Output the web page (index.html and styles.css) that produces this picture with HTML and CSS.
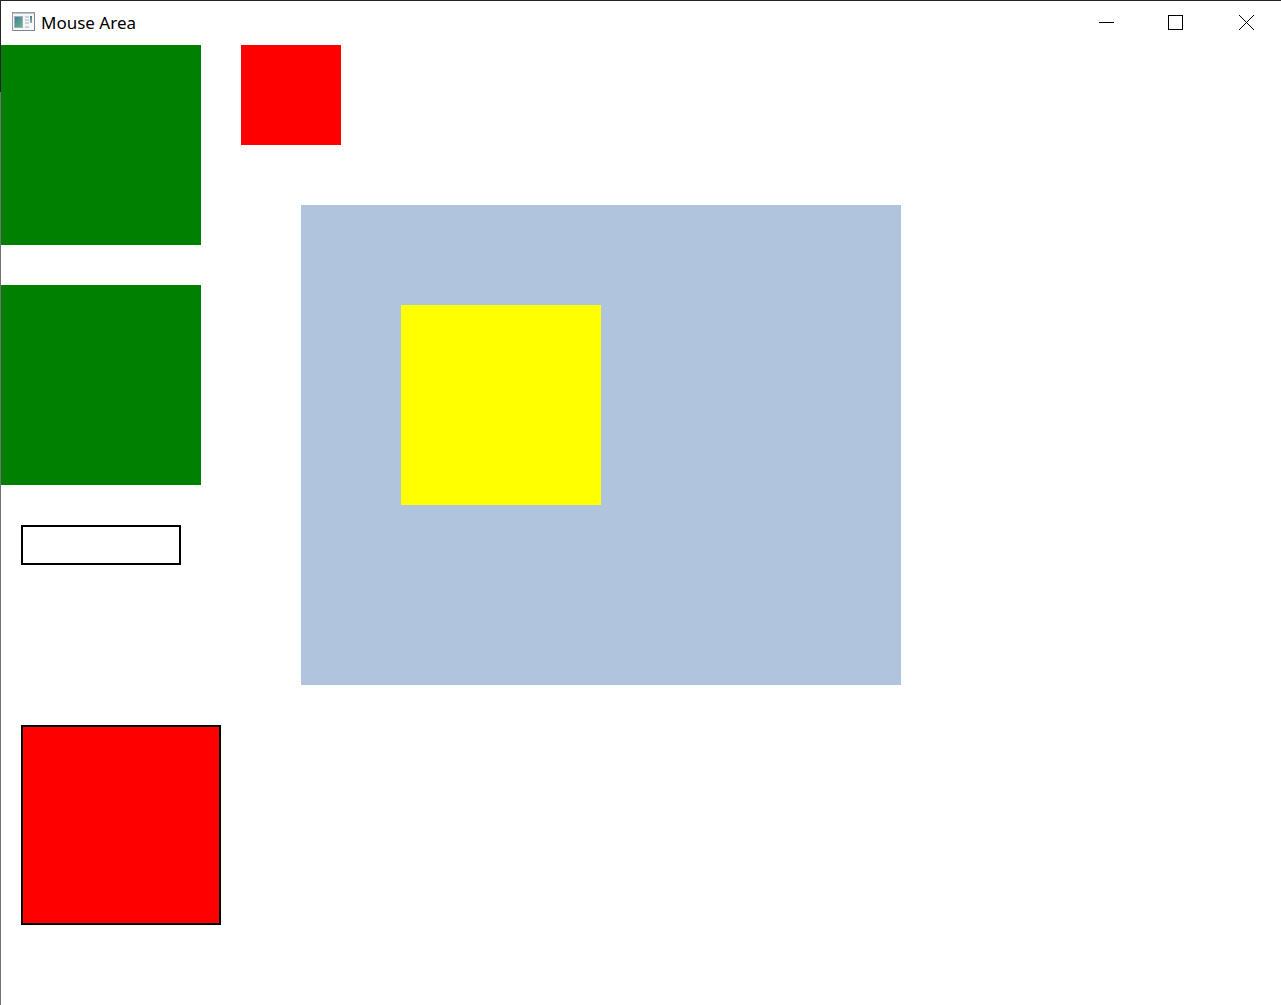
FILE: index.html
```html
<!DOCTYPE html>
<html lang="en">
<head>
<meta charset="utf-8">
<title>Mouse Area</title>
<link rel="stylesheet" href="styles.css">
</head>
<body>
<div class="window">
  <header class="titlebar">
    <svg class="app-icon" width="24" height="22" viewBox="0 0 24 22" aria-hidden="true">
      <defs>
        <linearGradient id="pane" x1="0" y1="0" x2="1" y2="1">
          <stop offset="0" stop-color="#4a78a8"/>
          <stop offset="1" stop-color="#62bd80"/>
        </linearGradient>
        <linearGradient id="bar" x1="0" y1="0" x2="0" y2="1">
          <stop offset="0" stop-color="#38549a"/>
          <stop offset="1" stop-color="#66b884"/>
        </linearGradient>
      </defs>
      <rect x="0.5" y="0.5" width="22" height="18" fill="#f6f7f8" stroke="#989da4"/>
      <path d="M1 1.5h21" stroke="#bcc4cf"/>
      <path d="M22.5 1v18M1 18.5h22" stroke="#82878e"/>
      <rect x="2.5" y="4.5" width="8" height="11" fill="url(#pane)" stroke="#a4b0be"/>
      <path d="M13 5h4M13 8h4M13 11h4M13 15h4" stroke="#d0d2d5" stroke-width="2"/>
      <rect x="18" y="4" width="2" height="7" fill="url(#bar)" fill-opacity="0.85"/>
    </svg>
    <h1 class="title">Mouse Area</h1>
    <div class="controls">
      <button class="control" type="button" aria-label="Minimize">
        <svg width="16" height="16" viewBox="0 0 16 16"><path d="M1 7.500h15" stroke="#000"/></svg>
      </button>
      <button class="control" type="button" aria-label="Maximize">
        <svg width="16" height="16" viewBox="0 0 16 16"><rect x="0.5" y="0.5" width="14" height="14" fill="none" stroke="#000"/></svg>
      </button>
      <button class="control" type="button" aria-label="Close">
        <svg width="16" height="16" viewBox="0 0 16 16"><path d="M1 0l15 15M16 0l-15 15" stroke="#000"/></svg>
      </button>
    </div>
  </header>
  <main class="content">
    <div class="side">
      <div class="tile green"></div>
      <div class="tile green"></div>
      <input class="field" type="text" aria-label="Text">
      <div class="tile outlined"></div>
    </div>
    <div class="stage">
      <div class="swatch"></div>
      <div class="panel">
        <div class="tile yellow"></div>
      </div>
    </div>
  </main>
</div>
</body>
</html>
```
FILE: styles.css
```css
* {
  box-sizing: border-box;
}

body {
  margin: 0;
  font-family: "Noto Sans", "Open Sans", sans-serif;
  color: #000;
}

/* The one-pixel frame is the window background showing at the top and left */
.window {
  display: flex;
  flex-direction: column;
  min-height: 100vh;
  padding: 1px 0 0 1px;
  background: linear-gradient(#25232a 92px, #737373 92px);
}

.titlebar {
  display: flex;
  align-items: center;
  height: 44px;
  padding-left: 11px;
  background: #fff;
}

.app-icon {
  flex: none;
}

.title {
  flex: 1;
  margin: 0 0 0 5px;
  font-size: 17px;
  font-weight: 400;
  line-height: 24px;
}

.controls {
  display: flex;
  align-self: stretch;
}

.control {
  display: flex;
  align-items: center;
  justify-content: center;
  width: 70px;
  padding: 0;
  border: 0;
  background: transparent;
}

.control:hover {
  background: #e5e5e5;
}

.content {
  display: flex;
  flex: 1;
  background: #fff;
}

.side {
  display: flex;
  flex-direction: column;
  gap: 40px;
  width: 240px;
}

.tile {
  width: 200px;
  height: 200px;
}

.green {
  background: #008000;
}

.yellow {
  background: #ff0;
}

.field {
  width: 160px;
  height: 40px;
  margin-left: 20px;
  padding: 0 8px;
  border: 2px solid #000;
  background: #fff;
  font: inherit;
}

.outlined {
  margin: 120px 0 80px 20px;
  border: 2px solid #000;
  background: #f00;
}

.swatch {
  width: 100px;
  height: 100px;
  background: #f00;
}

.panel {
  width: 600px;
  height: 480px;
  margin: 60px 0 0 60px;
  padding: 100px;
  background: #b0c4de;
}
```
